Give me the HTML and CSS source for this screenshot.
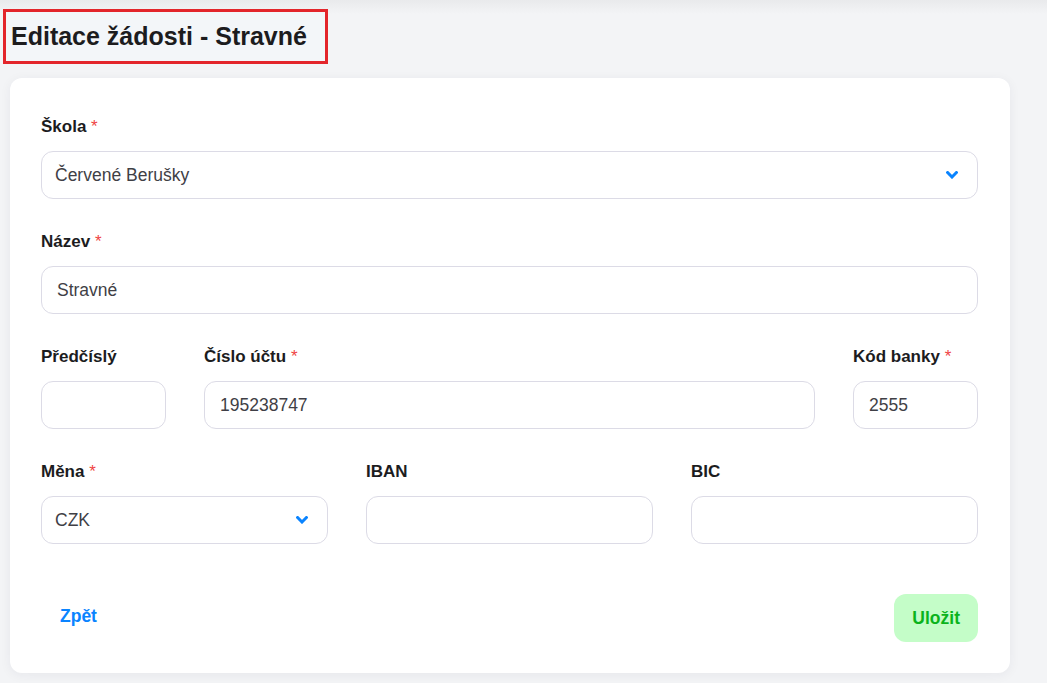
FILE: index.html
```html
<!DOCTYPE html>
<html lang="cs">
  <head>
    <meta charset="utf-8" />
    <title>Editace žádosti - Stravné</title>
    <meta name="viewport" content="width=device-width, initial-scale=1" />
    <link rel="stylesheet" href="styles.css">
  </head>
  <body>
    <div class="page">
      <h2 class="page-title">Editace žádosti - Stravné</h2>

      <form class="card">
        <div class="field">
          <label>Škola <span class="req">*</span></label>
          <div class="select-box">
            <span>Červené Berušky</span>
            <svg class="chevron" viewBox="0 0 12 8" width="12" height="8">
              <polyline points="1.6,1.6 6,6 10.4,1.6" />
            </svg>
          </div>
        </div>

        <div class="field">
          <label for="Nazev">Název <span class="req">*</span></label>
          <input type="text" id="Nazev" value="Stravné" />
        </div>

        <div class="row row-account">
          <div class="field">
            <label for="Predcisli">Předčíslý</label>
            <input type="text" id="Predcisli" />
          </div>
          <div class="field">
            <label for="Cislo">Číslo účtu <span class="req">*</span></label>
            <input type="text" id="Cislo" value="195238747" />
          </div>
          <div class="field">
            <label for="Kod">Kód banky <span class="req">*</span></label>
            <input type="text" id="Kod" value="2555" />
          </div>
        </div>

        <div class="row row-three">
          <div class="field">
            <label>Měna <span class="req">*</span></label>
            <div class="select-box">
              <span>CZK</span>
              <svg class="chevron" viewBox="0 0 12 8" width="12" height="8">
                <polyline points="1.6,1.6 6,6 10.4,1.6" />
              </svg>
            </div>
          </div>
          <div class="field">
            <label for="Iban">IBAN</label>
            <input type="text" id="Iban" />
          </div>
          <div class="field">
            <label for="Bic">BIC</label>
            <input type="text" id="Bic" />
          </div>
        </div>

        <div class="footer-buttons">
          <button type="button" class="btn-back">Zpět</button>
          <button type="submit" class="btn-save">Uložit</button>
        </div>
      </form>
    </div>
  </body>
</html>
```

FILE: styles.css
```css
* {
  margin: 0;
  padding: 0;
  box-sizing: border-box;
}

body {
  font-family: "Liberation Sans", Arial, sans-serif;
  background: linear-gradient(#e9eaec 0, #f3f4f6 14px, #f3f4f6 100%);
  color: #1c1c1e;
  min-height: 683px;
}

.page {
  padding: 9px 0 0 3px;
}

.page-title {
  display: inline-block;
  font-size: 25px;
  line-height: 28px;
  font-weight: bold;
  color: #1c1c1e;
  border: 3px solid #e3252b;
  padding: 10px 18px 11px 5px;
  background-color: #f3f6f9;
}

.card {
  display: block;
  width: 1000px;
  margin: 14px 0 0 7px;
  padding: 39px 32px 31px 31px;
  background: #fff;
  border-radius: 12px;
  box-shadow: 0 2px 12px rgba(30, 30, 60, 0.06);
}

.field {
  display: flex;
  flex-direction: column;
  margin-bottom: 33px;
}

.row .field {
  margin-bottom: 0;
}

.row {
  display: grid;
  gap: 38px;
  margin-bottom: 33px;
}

.row-account {
  grid-template-columns: 125px 1fr 125px;
}

.row-three {
  grid-template-columns: repeat(3, 1fr);
  margin-bottom: 50px;
}

label {
  font-size: 17px;
  line-height: 20px;
  font-weight: bold;
  color: #1c1c1e;
  margin-bottom: 14px;
}

.req {
  color: #ef4444;
  font-weight: normal;
}

input[type="text"],
.select-box {
  height: 48px;
  width: 100%;
  border: 1px solid #dcdbe6;
  border-radius: 12px;
  font-family: inherit;
  font-size: 17.5px;
  color: #3f3f46;
  background: #fff;
}

input[type="text"] {
  padding: 0 15px;
  outline: none;
}

.select-box {
  display: flex;
  align-items: center;
  justify-content: space-between;
  padding: 0 19px 0 13px;
}

.chevron polyline {
  fill: none;
  stroke: #0a84ff;
  stroke-width: 3;
  stroke-linecap: square;
}

.footer-buttons {
  display: flex;
  justify-content: space-between;
}

button {
  height: 48px;
  padding: 0 19px;
  border: none;
  border-radius: 12px;
  font-family: inherit;
  font-size: 17.5px;
  font-weight: bold;
  cursor: pointer;
  background: none;
}

.btn-back {
  color: #0a84ff;
  margin-top: -2px;
}

.btn-save {
  padding: 0 18px;
  background-color: #c4fdc8;
  color: #0bb31c;
}
```
